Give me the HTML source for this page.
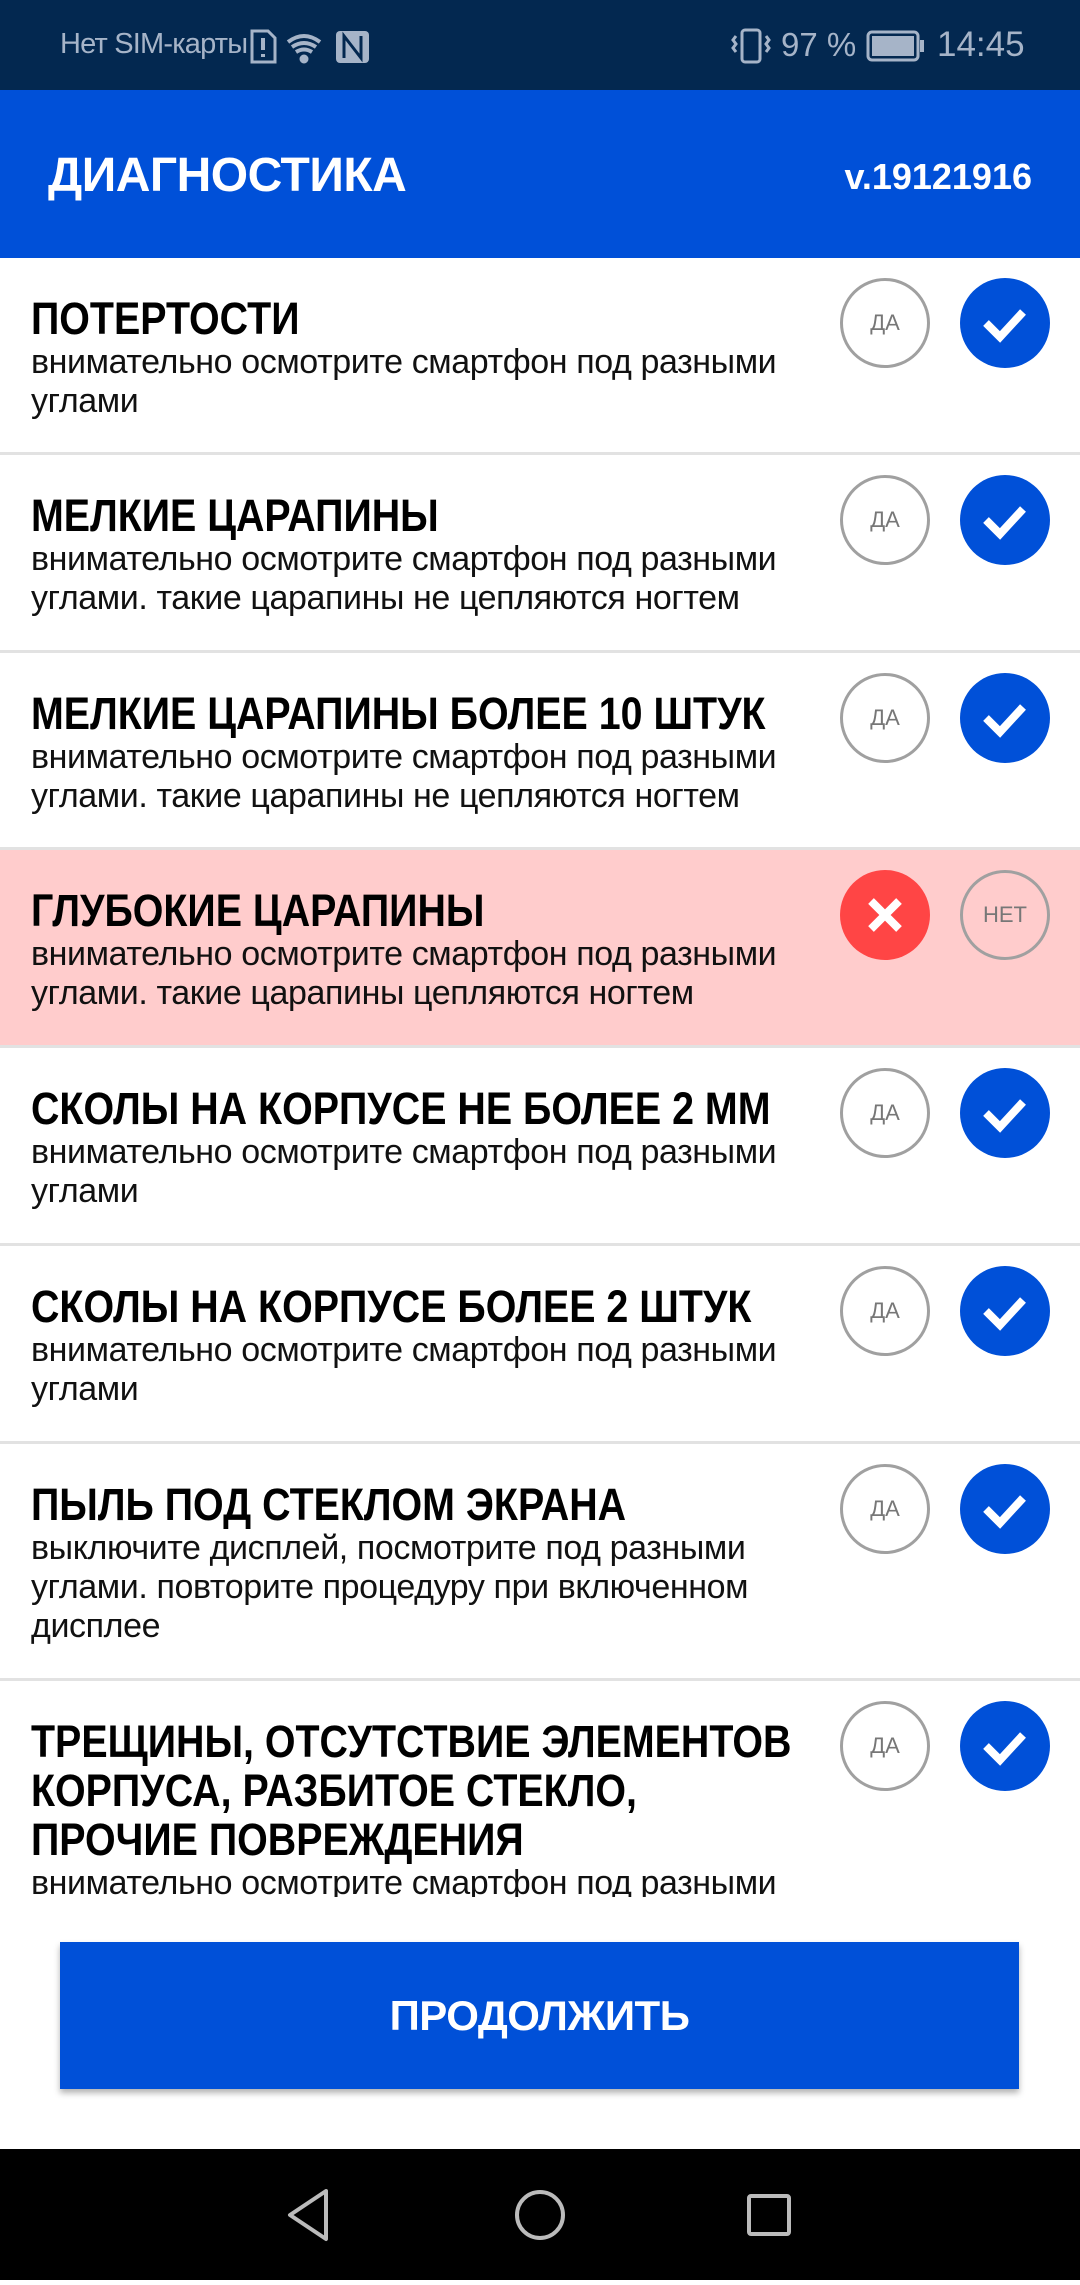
<!DOCTYPE html>
<html><head><meta charset="utf-8"><style>
*{margin:0;padding:0;box-sizing:border-box}
body{width:1080px;height:2280px;position:relative;overflow:hidden;background:#fff;font-family:"Liberation Sans",sans-serif}
.sb{position:absolute;left:0;top:0;width:1080px;height:90px;background:#032850;color:#a6b4c8;font-size:29px}
.ab{position:absolute;left:0;top:90px;width:1080px;height:168px;background:#0050d8;color:#fff;font-weight:bold}
.list{position:absolute;left:0;top:258px;width:1080px;height:1639px;overflow:hidden}
.row{position:absolute;left:0;width:1080px;background:#fff;border-top:3px solid #e2e2e2}
.row.red{background:#ffcccc}
.t{position:absolute;left:31px;font-weight:bold;font-size:45px;line-height:49px;color:#000;white-space:nowrap;transform:scaleX(0.875);transform-origin:0 0}
.s{position:absolute;left:31px;font-size:34px;line-height:39px;color:#111;white-space:nowrap;letter-spacing:-0.4px}
.c{position:absolute;width:90px;height:90px;border-radius:50%}
.da{border:3px solid #a0a0a0;color:#777;font-size:22px;text-align:center;line-height:84px}
.ck{background:#0050d8}
.x{background:#ff4545}
</style></head><body>
<div class="sb">
<span style="position:absolute;left:60px;top:28px;letter-spacing:-0.8px">Нет SIM-карты</span>
<svg style="position:absolute;left:250px;top:28px" width="120" height="36" viewBox="0 0 120 36" fill="none" stroke="#a6b4c8" stroke-width="3">
<path d="M2 3h16l7 7v24H2z"/><path d="M13 10v12M13 26v3" stroke-width="4"/>
<path d="M38 14q16-12 32 0M42 19q12-8 24 0M46 24q8-5 16 0" stroke-width="4"/><circle cx="54" cy="31" r="3" fill="#a6b4c8"/>
<rect x="86" y="3" width="33" height="32" rx="4" fill="#a6b4c8" stroke="none"/><path d="M94 30V8l17 22V8" stroke="#032850"/>
</svg>
<svg style="position:absolute;left:730px;top:28px" width="50" height="36" viewBox="0 0 50 36" fill="none" stroke="#a6b4c8" stroke-width="3"><rect x="12" y="2" width="18" height="32" rx="3"/><path d="M6 8l-3 4 3 4-3 4 3 4M36 8l3 4-3 4 3 4-3 4"/></svg>
<span style="position:absolute;left:781px;top:26px;font-size:33px">97 %</span>
<svg style="position:absolute;left:866px;top:30px" width="60" height="32" viewBox="0 0 60 32"><rect x="2" y="2" width="50" height="28" rx="4" fill="none" stroke="#a6b4c8" stroke-width="3"/><rect x="6" y="6" width="42" height="20" fill="#a6b4c8"/><rect x="54" y="10" width="4" height="12" fill="#a6b4c8"/></svg>
<span style="position:absolute;left:937px;top:25px;font-size:35px">14:45</span>
</div>
<div class="ab">
<span style="position:absolute;left:48px;top:58px;font-size:48px;letter-spacing:-0.5px">ДИАГНОСТИКА</span>
<span style="position:absolute;right:48px;top:66px;font-size:36px">v.19121916</span>
</div>
<div class="list">
<div class="row" style="top:-3px;height:200px;border-top-color:#fff">
<div class="t" style="top:36px">ПОТЕРТОСТИ</div>
<div class="s" style="top:85px">внимательно осмотрите смартфон под разными<br>углами</div>
<div class="c da" style="left:840px;top:20px">ДА</div><div class="c ck" style="left:960px;top:20px"><svg width="90" height="90"><path d="M26 45l14 14 23-25" fill="none" stroke="#fff" stroke-width="8"/></svg></div>
</div>
<div class="row" style="top:194px;height:200px">
<div class="t" style="top:36px">МЕЛКИЕ ЦАРАПИНЫ</div>
<div class="s" style="top:85px">внимательно осмотрите смартфон под разными<br>углами. такие царапины не цепляются ногтем</div>
<div class="c da" style="left:840px;top:20px">ДА</div><div class="c ck" style="left:960px;top:20px"><svg width="90" height="90"><path d="M26 45l14 14 23-25" fill="none" stroke="#fff" stroke-width="8"/></svg></div>
</div>
<div class="row" style="top:392px;height:200px">
<div class="t" style="top:36px">МЕЛКИЕ ЦАРАПИНЫ БОЛЕЕ 10 ШТУК</div>
<div class="s" style="top:85px">внимательно осмотрите смартфон под разными<br>углами. такие царапины не цепляются ногтем</div>
<div class="c da" style="left:840px;top:20px">ДА</div><div class="c ck" style="left:960px;top:20px"><svg width="90" height="90"><path d="M26 45l14 14 23-25" fill="none" stroke="#fff" stroke-width="8"/></svg></div>
</div>
<div class="row red" style="top:589px;height:200px">
<div class="t" style="top:36px">ГЛУБОКИЕ ЦАРАПИНЫ</div>
<div class="s" style="top:85px">внимательно осмотрите смартфон под разными<br>углами. такие царапины цепляются ногтем</div>
<div class="c x" style="left:840px;top:20px"><svg width="90" height="90"><path d="M31 31l28 28M59 31L31 59" fill="none" stroke="#fff" stroke-width="8"/></svg></div><div class="c da" style="left:960px;top:20px">НЕТ</div>
</div>
<div class="row" style="top:787px;height:200px">
<div class="t" style="top:36px">СКОЛЫ НА КОРПУСЕ НЕ БОЛЕЕ 2 ММ</div>
<div class="s" style="top:85px">внимательно осмотрите смартфон под разными<br>углами</div>
<div class="c da" style="left:840px;top:20px">ДА</div><div class="c ck" style="left:960px;top:20px"><svg width="90" height="90"><path d="M26 45l14 14 23-25" fill="none" stroke="#fff" stroke-width="8"/></svg></div>
</div>
<div class="row" style="top:985px;height:200px">
<div class="t" style="top:36px">СКОЛЫ НА КОРПУСЕ БОЛЕЕ 2 ШТУК</div>
<div class="s" style="top:85px">внимательно осмотрите смартфон под разными<br>углами</div>
<div class="c da" style="left:840px;top:20px">ДА</div><div class="c ck" style="left:960px;top:20px"><svg width="90" height="90"><path d="M26 45l14 14 23-25" fill="none" stroke="#fff" stroke-width="8"/></svg></div>
</div>
<div class="row" style="top:1183px;height:240px">
<div class="t" style="top:36px">ПЫЛЬ ПОД СТЕКЛОМ ЭКРАНА</div>
<div class="s" style="top:85px">выключите дисплей, посмотрите под разными<br>углами. повторите процедуру при включенном<br>дисплее</div>
<div class="c da" style="left:840px;top:20px">ДА</div><div class="c ck" style="left:960px;top:20px"><svg width="90" height="90"><path d="M26 45l14 14 23-25" fill="none" stroke="#fff" stroke-width="8"/></svg></div>
</div>
<div class="row" style="top:1420px;height:300px">
<div class="t" style="top:36px">ТРЕЩИНЫ, ОТСУТСТВИЕ ЭЛЕМЕНТОВ<br>КОРПУСА, РАЗБИТОЕ СТЕКЛО,<br>ПРОЧИЕ ПОВРЕЖДЕНИЯ</div>
<div class="s" style="top:183px">внимательно осмотрите смартфон под разными</div>
<div class="c da" style="left:840px;top:20px">ДА</div><div class="c ck" style="left:960px;top:20px"><svg width="90" height="90"><path d="M26 45l14 14 23-25" fill="none" stroke="#fff" stroke-width="8"/></svg></div>
</div>
</div>
<div style="position:absolute;left:60px;top:1942px;width:959px;height:147px;background:#0050d8;box-shadow:0 4px 6px rgba(0,0,0,.3);color:#fff;font-weight:bold;font-size:42px;text-align:center;line-height:147px;letter-spacing:-0.5px">ПРОДОЛЖИТЬ</div>
<div style="position:absolute;left:0;top:2149px;width:1080px;height:131px;background:#000">
<svg width="1080" height="131" fill="none" stroke="#bbb" stroke-width="4">
<path d="M326 42L290 66l36 24z" stroke-linejoin="round"/>
<circle cx="540" cy="66" r="23"/>
<rect x="749" y="47" width="40" height="38" rx="2"/>
</svg></div>
</body></html>
